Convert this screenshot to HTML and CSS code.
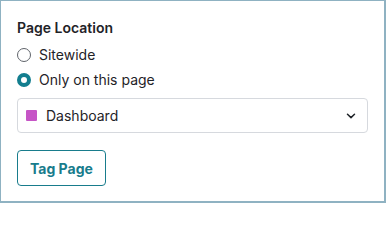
FILE: index.html
```html
<!DOCTYPE html>
<html>
<head>
<meta charset="utf-8">
<link rel="stylesheet" href="styles.css">
</head>
<body>
<div class="panel">
  <div class="title">Page Location</div>
  <div class="options">
    <label class="option"><span class="radio"></span><span>Sitewide</span></label>
    <label class="option"><span class="radio checked"></span><span>Only on this page</span></label>
  </div>
  <div class="select">
    <span class="swatch"></span>
    <span class="select-label">Dashboard</span>
    <svg class="chevron" width="10" height="6" viewBox="0 0 10 6"><path d="M1.5 1.2 L5 4.6 L8.5 1.2" fill="none" stroke="#1f2328" stroke-width="1.5" stroke-linecap="round" stroke-linejoin="round"/></svg>
  </div>
  <button class="tag-btn">Tag Page</button>
</div>
</body>
</html>
```
FILE: styles.css
```css
html, body {
  margin: 0;
  padding: 0;
  background: #ffffff;
}
body {
  font-family: Inter, "Liberation Sans", sans-serif;
  color: #1f2328;
}
.panel {
  box-sizing: border-box;
  width: 386px;
  height: 203px;
  border-top: 1px solid #8fb2c2;
  border-left: 1px solid #8fb2c2;
  border-right: 2px solid #8fb2c2;
  border-bottom: 2px solid #8fb2c2;
  padding: 17px 17px 0 16px;
  display: flex;
  flex-direction: column;
  align-items: flex-start;
}
.title {
  font-size: 14px;
  font-weight: 600;
  line-height: 20px;
  color: #1f2328;
}
.options {
  margin-top: 5px;
  display: flex;
  flex-direction: column;
}
.option {
  display: flex;
  align-items: center;
  gap: 8px;
  font-size: 14px;
  line-height: 24.5px;
  color: #1f2328;
}
.radio {
  box-sizing: border-box;
  width: 14px;
  height: 14px;
  border-radius: 50%;
  border: 1px solid #5f646b;
  background: #fff;
  flex: none;
}
.radio.checked {
  border: 4.5px solid #137e8f;
}
.select {
  box-sizing: border-box;
  margin-top: 6px;
  width: 351px;
  height: 35px;
  border: 1px solid #d6d9de;
  border-radius: 4px;
  display: flex;
  align-items: center;
  padding: 0 11px 0 8px;
  font-size: 14px;
}
.swatch {
  width: 11px;
  height: 11px;
  background: #c655c6;
  border-radius: 1px;
  flex: none;
}
.select-label {
  margin-left: 9px;
  flex: 1;
  color: #1f2328;
}
.chevron {
  flex: none;
}
.tag-btn {
  box-sizing: border-box;
  margin-top: 17px;
  height: 36px;
  padding: 0 12px;
  border: 1.5px solid #187c8c;
  border-radius: 4px;
  background: #fff;
  color: #187c8c;
  font-family: Inter, "Liberation Sans", sans-serif;
  font-size: 14px;
  font-weight: 700;
}
```
